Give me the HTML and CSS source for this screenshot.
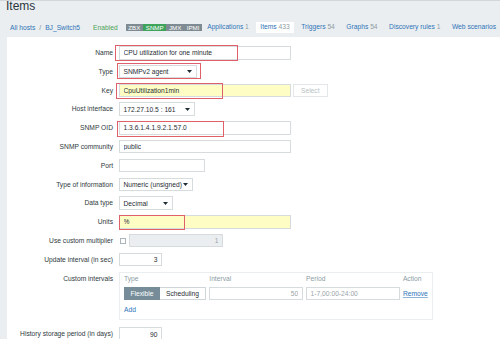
FILE: index.html
```html
<!DOCTYPE html>
<html lang="en">
<head>
    <meta charset="UTF-8">
    <meta name="viewport" content="width=device-width, initial-scale=1.0">
    <title>Items</title>
    <link rel="stylesheet" href="styles.css">
</head>
<body>
    <h1 class="page-title">Items</h1>
    <nav class="host-nav">
        <a class="crumb" href="#">All hosts</a>
        <span class="crumb-sep">/</span>
        <a class="crumb" href="#">BJ_Switch5</a>
        <span class="status-enabled">Enabled</span>
        <span class="badges">
            <span class="badge">ZBX</span><span class="badge badge-on">SNMP</span><span class="badge">JMX</span><span class="badge">IPMI</span>
        </span>
        <a class="tab" href="#">Applications <span class="count">1</span></a>
        <span class="tab tab-active">Items <span class="count">433</span></span>
        <a class="tab" href="#">Triggers <span class="count">54</span></a>
        <a class="tab" href="#">Graphs <span class="count">54</span></a>
        <a class="tab" href="#">Discovery rules <span class="count">1</span></a>
        <a class="tab" href="#">Web scenarios</a>
    </nav>

    <main class="panel">
        <form class="item-form">
            <label class="form-label">Name</label>
            <div class="form-field">
                <div class="marked">
                    <input class="text-input w-wide" value="CPU utilization for one minute">
                    <span class="mark mark-name"></span>
                </div>
            </div>

            <label class="form-label">Type</label>
            <div class="form-field">
                <div class="marked">
                    <div class="select w-type"><span>SNMPv2 agent</span><svg width="5" height="3" viewBox="0 0 5 3"><polygon points="0,0 5,0 2.5,3" fill="#1f2c33"/></svg></div>
                    <span class="mark mark-type"></span>
                </div>
            </div>

            <label class="form-label">Key</label>
            <div class="form-field">
                <div class="marked">
                    <input class="text-input w-wide is-required" value="CpuUtilization1min">
                    <span class="mark mark-key"></span>
                </div>
                <button type="button" class="btn-alt">Select</button>
            </div>

            <label class="form-label">Host interface</label>
            <div class="form-field">
                <div class="select w-host"><span>172.27.10.5 : 161</span><svg width="5" height="3" viewBox="0 0 5 3"><polygon points="0,0 5,0 2.5,3" fill="#1f2c33"/></svg></div>
            </div>

            <label class="form-label">SNMP OID</label>
            <div class="form-field">
                <div class="marked">
                    <input class="text-input w-wide" value="1.3.6.1.4.1.9.2.1.57.0">
                    <span class="mark mark-oid"></span>
                </div>
            </div>

            <label class="form-label">SNMP community</label>
            <div class="form-field">
                <input class="text-input w-wide" value="public">
            </div>

            <label class="form-label">Port</label>
            <div class="form-field">
                <input class="text-input w-port" value="">
            </div>

            <label class="form-label">Type of information</label>
            <div class="form-field">
                <div class="select w-info"><span>Numeric (unsigned)</span><svg width="5" height="3" viewBox="0 0 5 3"><polygon points="0,0 5,0 2.5,3" fill="#1f2c33"/></svg></div>
            </div>

            <label class="form-label">Data type</label>
            <div class="form-field">
                <div class="select w-data"><span>Decimal</span><svg width="5" height="3" viewBox="0 0 5 3"><polygon points="0,0 5,0 2.5,3" fill="#1f2c33"/></svg></div>
            </div>

            <label class="form-label">Units</label>
            <div class="form-field">
                <div class="marked">
                    <input class="text-input w-wide is-required" value="%">
                    <span class="mark mark-units"></span>
                </div>
            </div>

            <label class="form-label">Use custom multiplier</label>
            <div class="form-field">
                <span class="checkbox"></span>
                <input class="text-input w-multi num" value="1" disabled>
            </div>

            <label class="form-label">Update interval (in sec)</label>
            <div class="form-field">
                <span class="text-box w-num">3</span>
            </div>

            <label class="form-label">Custom intervals</label>
            <div class="form-field">
                <div class="intervals">
                    <div class="intervals-row intervals-head">
                        <span>Type</span>
                        <span>Interval</span>
                        <span>Period</span>
                        <span>Action</span>
                    </div>
                    <div class="intervals-row">
                        <div class="segmented">
                            <span class="seg seg-on">Flexible</span><span class="seg">Scheduling</span>
                        </div>
                        <input class="text-input num muted" value="50">
                        <input class="text-input muted" value="1-7,00:00-24:00">
                        <a class="link-action" href="#">Remove</a>
                    </div>
                    <a class="link-add" href="#">Add</a>
                </div>
            </div>

            <label class="form-label">History storage period (in days)</label>
            <div class="form-field">
                <span class="text-box w-num">90</span>
            </div>
        </form>
    </main>
</body>
</html>
```

FILE: styles.css
```css
body {
    box-sizing: border-box;
    margin: 0;
    height: 339px;
    overflow: hidden;
    background-color: #ebeef0;
    border-top: 1px solid #d3d7da;
    color: #1f2c33;
    font-family: 'Liberation Sans', Arial, sans-serif;
    font-size: 6.7px;
}
a {
    color: #2d74b8;
    text-decoration: none;
}
.page-title {
    margin: -1px 0 0;
    padding-left: 6px;
    font-size: 12px;
    line-height: 12px;
    font-weight: normal;
    color: #2a363d;
}
.host-nav {
    display: flex;
    align-items: center;
    height: 11px;
    margin-top: 10px;
    padding-left: 10px;
    white-space: nowrap;
}
.crumb-sep {
    margin: 0 4px;
    color: #768d99;
}
.status-enabled {
    margin-left: 13px;
    color: #4aa356;
}
.badges {
    display: flex;
    margin-left: 8px;
    margin-right: 1px;
}
.badge {
    padding: 0 2.7px;
    height: 7.5px;
    line-height: 7.5px;
    background-color: #7f8b92;
    color: #fff;
    font-size: 6.2px;
}
.badge-on {
    background-color: #3ea35b;
}
.tab {
    height: 11px;
    line-height: 10.5px;
    padding: 0 4px;
    margin-right: 3.5px;
}
.tab-active {
    background-color: #fff;
    color: #2d74b8;
}
.count {
    color: #8d9ca4;
}
.panel {
    box-sizing: border-box;
    height: 302px;
    overflow: hidden;
    margin: 4px 0 0 7px;
    padding-top: 9px;
    background-color: #fff;
}
.item-form {
    display: grid;
    grid-template-columns: 106px 1fr;
    column-gap: 6px;
    row-gap: 5.3px;
}
.form-label {
    height: 13.5px;
    line-height: 13.5px;
    text-align: right;
    white-space: nowrap;
    color: #2f3a40;
}
.form-field {
    display: flex;
    align-items: center;
    gap: 2px;
    min-height: 13.5px;
}
.marked {
    position: relative;
    display: flex;
}
.mark {
    position: absolute;
    border: 1.4px solid #e0606a;
    pointer-events: none;
}
.mark-name {
    left: -4px;
    top: -1px;
    width: 121px;
    height: 14px;
}
.mark-type {
    left: -2px;
    top: -1.5px;
    width: 82px;
    height: 14px;
}
.mark-key {
    left: -3px;
    top: -1px;
    width: 105px;
    height: 14px;
}
.mark-oid {
    left: -2px;
    top: -0.5px;
    width: 105px;
    height: 14px;
}
.mark-units {
    left: 0;
    top: 0;
    width: 64px;
    height: 12.5px;
}
.text-input,
.text-box {
    box-sizing: border-box;
    height: 13.5px;
    padding: 0 3.5px;
    border: 1px solid #d6dbde;
    background-color: #fff;
    font: inherit;
    color: #1f2c33;
    outline: none;
}
.text-box {
    display: flex;
    align-items: center;
    justify-content: flex-end;
    border-color: #d6dbde;
    color: #1f2c33;
}
.text-input.is-required {
    background-color: #fefec4;
}
.text-input.num {
    text-align: right;
}
.text-input.muted {
    color: #9aa4a9;
}
.text-input:disabled {
    background-color: #ebeef0;
    color: #9aa4a9;
}
.w-wide { width: 172px; }
.w-port { width: 86px; }
.w-num { width: 43px; }
.w-multi { width: 94px; margin-left: 1px; }
.select {
    box-sizing: border-box;
    display: flex;
    align-items: center;
    justify-content: space-between;
    height: 13.5px;
    padding: 0 4px 0 3.5px;
    border: 1px solid #d6dbde;
    background-color: #fff;
}
.w-type { width: 78px; }
.w-host { width: 76px; }
.w-info { width: 74px; }
.w-data { width: 54px; }
.btn-alt {
    box-sizing: border-box;
    height: 13.5px;
    width: 34.5px;
    padding: 0;
    border: 1px solid #e3e7ea;
    background-color: #fff;
    font: inherit;
    color: #b7bfc4;
}
.checkbox {
    box-sizing: border-box;
    width: 6px;
    height: 6px;
    margin-left: 1px;
    border: 1px solid #aab4ba;
    background-color: #fff;
}
.intervals {
    box-sizing: border-box;
    width: 314px;
    margin-bottom: 2.5px;
    padding: 2px 4px 5px;
    border: 1px solid #ebeef0;
}
.intervals-row {
    display: grid;
    grid-template-columns: 82px 93.5px 93.5px auto;
    column-gap: 3.3px;
    align-items: center;
}
.intervals-head {
    height: 8px;
    line-height: 8px;
    color: #8d9ca4;
}
.intervals-row + .intervals-row {
    margin-top: 4px;
    height: 13px;
}
.intervals-row .text-input {
    width: 100%;
    height: 13px;
}
.segmented {
    display: flex;
    height: 13px;
}
.seg {
    box-sizing: border-box;
    display: flex;
    align-items: center;
    justify-content: center;
    width: 46px;
    border: 1px solid #cfd6da;
    border-left: none;
    color: #1f2c33;
}
.seg-on {
    width: 36px;
    border: 1px solid #768d99;
    background-color: #768d99;
    color: #fff;
}
.link-action {
    text-decoration: underline;
    text-decoration-color: #8fb4d6;
}
.link-add {
    display: block;
    width: max-content;
    margin-top: 6px;
    line-height: 8px;
}
```
